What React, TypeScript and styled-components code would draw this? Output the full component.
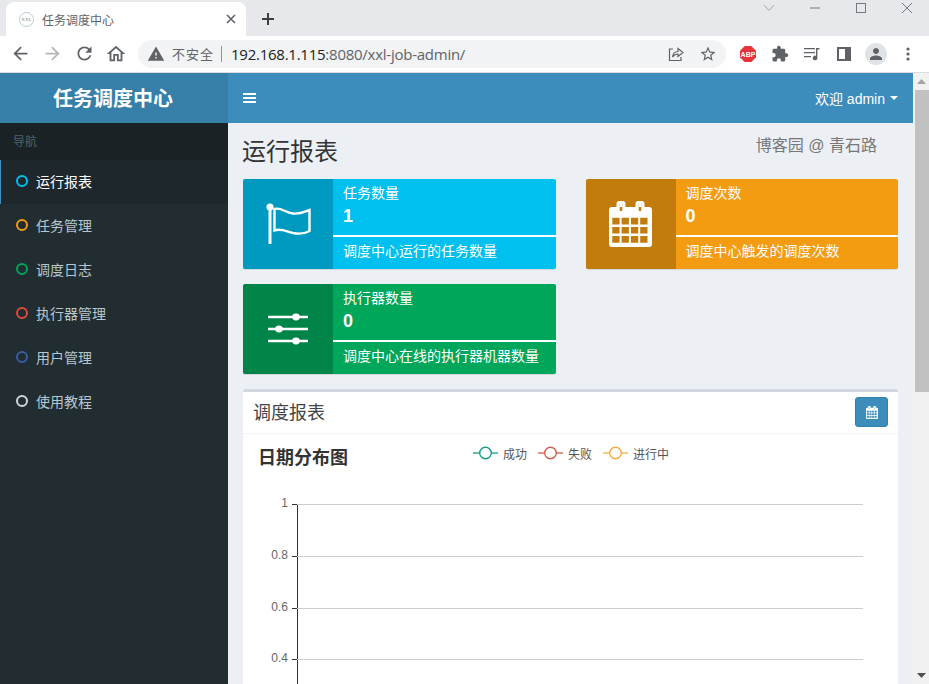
import React from "react";
import styled, { createGlobalStyle } from "styled-components";

const Global = createGlobalStyle`
  html, body { margin: 0; padding: 0; height: 100%; overflow: hidden; background: #fff; }
  * { box-sizing: border-box; }
  body { font-family: "Liberation Sans", "Noto Sans CJK SC", sans-serif; font-size: 14px; color: #333; }
`;

const Window = styled.div`
  width: 929px; height: 684px; display: flex; flex-direction: column; overflow: hidden;
`;
const TabStrip = styled.div`
  height: 36px; background: #e6e8ec; display: flex; align-items: flex-end; flex: none;
`;
const Tab = styled.div`
  width: 240px; height: 34px; margin-left: 6px; background: #fff; border-radius: 8px 8px 0 0;
  display: flex; align-items: center; padding: 0 9px 0 13px; color: #5f6368; font-size: 12px;
`;
const Favicon = styled.span`
  width: 15px; height: 15px; border-radius: 50%; border: 1.5px solid #b9cbd6; color: #8a8a8a;
  font: 5px "Liberation Serif", serif; display: flex; align-items: center; justify-content: center; margin-right: 8px; flex: none;
`;
const TabTitle = styled.span` flex: 1; padding-top: 1px; `;
const NewTab = styled.div`
  width: 28px; height: 28px; margin: 0 0 3px 8px; display: flex; align-items: center; justify-content: center; color: #3c4043;
`;
const WindowControls = styled.div`
  margin-left: auto; margin-right: -1px; align-self: flex-start; display: flex; height: 16px;
`;
const WindowButton = styled.div`
  width: 46px; height: 16px; display: flex; align-items: center; justify-content: center; color: #75787c;
`;
const Toolbar = styled.div`
  height: 37px; flex: none; background: #fff; display: flex; align-items: center; padding: 0 5px 1px 4px;
  border-bottom: 1px solid #dadce0;
`;
const ToolButton = styled.div<{ $dim?: boolean }>`
  width: 32px; height: 32px; flex: none; display: flex; align-items: center; justify-content: center;
  color: ${(p) => (p.$dim ? "#b4b6b9" : "#5f6368")};
`;
const Omnibox = styled.div`
  width: 588px; height: 28px; margin: 0 6px; background: #f1f3f4; border-radius: 14px; flex: none;
  display: flex; align-items: center; padding: 0 2px 0 9px; color: #5f6368;
`;
const Insecure = styled.span` font-size: 13px; margin-left: 7px; color: #5f6368; letter-spacing: 1px; `;
const Divider = styled.span` width: 1px; height: 16px; background: #8f9296; margin: 0 9px 0 7px; `;
const Url = styled.span` font-size: 15px; color: #5f6368; flex: 1; white-space: nowrap; font-family: "Open Sans", "Liberation Sans", sans-serif; letter-spacing: -0.25px; `;
const Host = styled.span` color: #202124; `;
const OmniIcon = styled.span` width: 32px; display: flex; justify-content: center; color: #5f6368; `;
const Avatar = styled.span`
  width: 22px; height: 22px; border-radius: 50%; background: #dfe3e6; display: flex; align-items: center; justify-content: center; color: #5f6368;
`;

const Viewport = styled.div` flex: 1; display: flex; min-height: 0; `;
const Page = styled.div`
  width: 913px; flex: none; display: grid; grid-template-columns: 228px 1fr; grid-template-rows: 50px 1fr; overflow: hidden; background: #ecf0f5;
`;
const Logo = styled.div`
  background: #367fa9; color: #fff; font-size: 20px; font-weight: 700; display: flex; align-items: center; justify-content: center;
  padding: 0 2px 2px 0;
`;
const Navbar = styled.div`
  background: #3c8dbc; color: #fff; display: flex; align-items: center; justify-content: space-between; padding: 0 15px;
`;
const Burger = styled.span` display: flex; color: #fff; `;
const UserMenu = styled.div` display: flex; align-items: center; font-size: 14px; gap: 5px; `;
const Caret = styled.span` width: 0; height: 0; border-left: 4px solid transparent; border-right: 4px solid transparent; border-top: 4px solid #fff; `;

const Sidebar = styled.nav` background: #222d32; display: flex; flex-direction: column; `;
const NavHeader = styled.div`
  height: 37px; background: #1a2226; color: #4b646f; font-size: 12px; padding: 0 0 2px 13px; display: flex; align-items: center;
`;
const NavItem = styled.div<{ $active?: boolean }>`
  height: 44px; display: flex; align-items: center; padding: 0 0 2px 15px; gap: 8px; font-size: 14px;
  color: ${(p) => (p.$active ? "#fff" : "#b8c7ce")};
  background: ${(p) => (p.$active ? "#1e282c" : "transparent")};
  border-left: 1px solid ${(p) => (p.$active ? "#3c8dbc" : "transparent")};
`;
const Dot = styled.span<{ $color: string }>`
  width: 12px; height: 12px; border-radius: 50%; border: 2px solid ${(p) => p.$color}; flex: none;
`;

const Content = styled.main` padding: 15px 15px 0; min-width: 0; overflow: hidden; `;
const TitleRow = styled.div` display: flex; justify-content: space-between; align-items: flex-start; height: 41px; padding-right: 21px; `;
const PageTitle = styled.h1` margin: 0 0 0 -1px; font-size: 24px; font-weight: 400; line-height: 28px; color: #333; `;
const Credit = styled.span` font-size: 16px; color: #777; line-height: 16px; `;
const Cards = styled.div` display: grid; grid-template-columns: 1fr 1fr; gap: 15px 30px; `;
const Card = styled.div<{ $color: string }>`
  height: 90px; display: flex; background: ${(p) => p.$color}; color: #fff; border-radius: 2px; box-shadow: 0 1px 1px rgba(0,0,0,.1); overflow: hidden;
`;
const CardIcon = styled.div`
  width: 90px; flex: none; background: rgba(0,0,0,.2); display: flex; align-items: center; justify-content: center;
`;
const CardBody = styled.div` flex: 1; padding: 4px 0 0; display: flex; flex-direction: column; `;
const CardLabel = styled.div` padding-left: 10px; font-size: 14px; line-height: 20px; `;
const CardNumber = styled.div` padding-left: 10px; font-size: 18px; font-weight: 700; line-height: 24px; margin-top: 1px; `;
const CardLine = styled.div` height: 2px; background: #fff; margin-top: 7px; `;
const CardNote = styled.div` padding-left: 10px; font-size: 14px; line-height: 29px; `;

const Box = styled.section`
  margin-top: 15px; background: #fff; border-top: 3px solid #d2d6de; border-radius: 3px 3px 0 0;
`;
const BoxHeader = styled.div`
  height: 42px; display: flex; align-items: center; justify-content: space-between; padding: 0 10px; border-bottom: 1px solid #f4f4f4;
`;
const BoxTitle = styled.h3` margin: -4px 0 0; font-size: 18px; font-weight: 400; color: #444; `;
const CalButton = styled.button`
  width: 33px; height: 30px; padding: 0; background: #3c8dbc; border: 1px solid #367fa9; border-radius: 3px; color: #fff;
  display: flex; align-items: center; justify-content: center; margin-top: -1px;
`;
const ChartHead = styled.div` display: flex; align-items: flex-start; padding: 11px 0 0 15px; height: 54px; `;
const ChartTitle = styled.h4` margin: 0; font-size: 18px; font-weight: 700; color: #333; line-height: 26px; `;
const Legend = styled.div` display: flex; margin: -2px 0 0 125px; gap: 11px; `;
const LegendItem = styled.div` display: flex; align-items: center; gap: 5px; font-size: 12px; color: #555; height: 20px; `;
const Plot = styled.svg` display: block; width: 655px; height: 260px; `;
const AxisText = styled.text` font-size: 12px; fill: #666; font-family: "Liberation Sans", sans-serif; `;

const Scrollbar = styled.div` flex: 1; background: #f1f1f1; display: flex; flex-direction: column; align-items: center; `;
const ArrowUp = styled.span` height: 17px; flex: none; display: flex; align-items: center; justify-content: center; `;
const Thumb = styled.div` width: 14px; margin-left: 1px; height: 302px; background: #c1c1c1; `;
const ArrowDown = styled.span` margin-top: auto; height: 17px; display: flex; align-items: center; justify-content: center; `;

const I = ({ d, size = 21 }: { d: string; size?: number }) => (
  <svg width={size} height={size} viewBox="0 0 24 24" fill="currentColor"><path d={d} /></svg>
);

const Flag = () => (
  <svg width="50" height="45" viewBox="0 0 50 45" style={{ marginLeft: 4 }}>
    <circle cx="5" cy="5" r="3.6" fill="#fff" />
    <path d="M5 6V42" stroke="#fff" strokeWidth="3" fill="none" />
    <path d="M9.5 7C16 5 20 10.5 28 11.5C35 12.5 40 9.5 44.5 8V29C40 31.5 35 32.5 28 31C20 29 16 26 9.5 28.5Z" stroke="#fff" strokeWidth="2.4" fill="none" />
  </svg>
);
const Sliders = () => (
  <svg width="42" height="34" viewBox="0 0 42 34">
    <g stroke="#fff" strokeWidth="2.4"><path d="M1 5H41M1 17H41M1 29H41" /></g>
    <g fill="#fff"><ellipse cx="29" cy="5" rx="3.8" ry="3.4" /><ellipse cx="12" cy="17" rx="3.8" ry="3.4" /><ellipse cx="29" cy="29" rx="3.8" ry="3.4" /></g>
  </svg>
);
const cells = (() => {
  let s = "";
  for (let r = 0; r < 3; r++) for (let c = 0; c < 4; c++) {
    const x = 3.3 + c * 9.3, y = 16.7 + r * 9.2;
    s += `M${x} ${y}h7.3v6.7h-7.3z`;
  }
  return s;
})();
const Calendar = ({ w, h }: { w: number; h: number }) => (
  <svg width={w} height={h} viewBox="0 0 43 46" fill="#fff">
    <path fillRule="evenodd" d={`M3 6H40A3 3 0 0 1 43 9V43A3 3 0 0 1 40 46H3A3 3 0 0 1 0 43V9A3 3 0 0 1 3 6Z M10.5 3h3v8h-3z M29.5 3h3v8h-3z ${cells}`} />
    <path fillRule="evenodd" d="M7.5 3A3 3 0 0 1 10.5 0H13.5A3 3 0 0 1 16.500 3V10A3 3 0 0 1 13.500 13H10.500A3 3 0 0 1 7.500 10Z M10.500 3h3v7h-3z" />
    <path fillRule="evenodd" d="M26.500 3A3 3 0 0 1 29.500 0H32.500A3 3 0 0 1 35.500 3V10A3 3 0 0 1 32.500 13H29.500A3 3 0 0 1 26.500 10Z M29.500 3h3v7h-3z" />
  </svg>
);
const Mark = ({ color }: { color: string }) => (
  <svg width="25" height="14" viewBox="0 0 25 14">
    <path d="M0 7H25" stroke={color} strokeWidth="1.3" />
    <circle cx="12.500" cy="7" r="5.800" fill="#fff" stroke={color} strokeWidth="1.4" />
  </svg>
);

const nav: [string, string][] = [
  ["运行报表", "#00c0ef"], ["任务管理", "#f39c12"], ["调度日志", "#00a65a"],
  ["执行器管理", "#dd4b39"], ["用户管理", "#3b5ba5"], ["使用教程", "#d2d6de"],
];
const ticks: [string, number][] = [["1", 70], ["0.8", 122], ["0.6", 174], ["0.4", 225]];

export default function App() {
  return (
    <Window>
      <Global />
      <TabStrip>
        <Tab>
          <Favicon>XXL</Favicon>
          <TabTitle>任务调度中心</TabTitle>
          <svg width="12" height="12" viewBox="0 0 12 12"><path d="M2 2L10 10M10 2L2 10" stroke="#5f6368" strokeWidth="1.6" /></svg>
        </Tab>
        <NewTab><svg width="14" height="14" viewBox="0 0 14 14"><path d="M7 1V13M1 7H13" stroke="currentColor" strokeWidth="2" /></svg></NewTab>
        <WindowControls>
          <WindowButton><svg width="12" height="8" viewBox="0 0 12 8" fill="none"><path d="M1 1L6 6.5L11 1" stroke="#a4a6aa" /></svg></WindowButton>
          <WindowButton><svg width="12" height="2" viewBox="0 0 12 2"><path d="M1 1H11" stroke="currentColor" /></svg></WindowButton>
          <WindowButton><svg width="10" height="10" viewBox="0 0 10 10"><rect x=".5" y=".5" width="9" height="9" fill="none" stroke="currentColor" /></svg></WindowButton>
          <WindowButton><svg width="12" height="12" viewBox="0 0 12 12"><path d="M1 1L11 11M11 1L1 11" stroke="currentColor" /></svg></WindowButton>
        </WindowControls>
      </TabStrip>
      <Toolbar>
        <ToolButton><I d="M20 11H7.83l5.59-5.59L12 4l-8 8 8 8 1.41-1.41L7.83 13H20v-2z" /></ToolButton>
        <ToolButton $dim><I d="M12 4l-1.41 1.41L16.17 11H4v2h12.17l-5.58 5.59L12 20l8-8z" /></ToolButton>
        <ToolButton><I d="M17.65 6.35C16.2 4.9 14.21 4 12 4c-4.42 0-7.99 3.58-7.99 8s3.57 8 7.99 8c3.73 0 6.84-2.55 7.73-6h-2.08c-.82 2.33-3.04 4-5.65 4-3.31 0-6-2.69-6-6s2.69-6 6-6c1.66 0 3.14.69 4.22 1.78L13 11h7V4l-2.35 2.35z" /></ToolButton>
        <ToolButton><I size={22} d="M12 5.69l5 4.5V18h-2v-6H9v6H7v-7.81l5-4.5M12 3L2 12h3v8h6v-6h2v6h6v-8h3L12 3z" /></ToolButton>
        <Omnibox>
          <I size={18} d="M1 21h22L12 2 1 21zm12-3h-2v-2h2v2zm0-4h-2v-4h2v4z" />
          <Insecure>不安全</Insecure>
          <Divider />
          <Url><Host>192.168.1.115</Host>:8080/xxl-job-admin/</Url>
          <OmniIcon>
            <svg width="16" height="16" viewBox="0 0 16 16" fill="none" stroke="currentColor" strokeWidth="1.2"><path d="M5 3H1.5V14.5H13V11" /><path d="M4.5 11C5 7.5 7.5 5.5 10 5.5V2.5L15 6.5L10 10.5V8C8 8 6 9 4.5 11Z" /></svg>
          </OmniIcon>
          <OmniIcon><I size={18} d="M22 9.24l-7.19-.62L12 2 9.19 8.63 2 9.24l5.46 4.73L5.82 21 12 17.27 18.18 21l-1.63-7.03L22 9.24zM12 15.4l-3.76 2.27 1-4.28-3.32-2.88 4.38-.38L12 6.1l1.71 4.04 4.38.38-3.32 2.88 1 4.28L12 15.4z" /></OmniIcon>
        </Omnibox>
        <ToolButton>
          <svg width="16" height="16" viewBox="0 0 16 16">
            <path d="M4.700 0H11.300L16 4.700V11.300L11.300 16H4.700L0 11.300V4.700Z" fill="#e5323b" />
            <text x="8" y="10.800" textAnchor="middle" fontSize="7" fontWeight="700" fill="#fff" fontFamily="Liberation Sans">ABP</text>
          </svg>
        </ToolButton>
        <ToolButton><I size={18} d="M20.5 11H19V7c0-1.1-.9-2-2-2h-4V3.5C13 2.12 11.88 1 10.5 1S8 2.12 8 3.5V5H4c-1.1 0-1.99.9-1.99 2v3.8H3.5c1.49 0 2.7 1.21 2.7 2.7s-1.21 2.7-2.7 2.7H2V20c0 1.1.9 2 2 2h3.8v-1.5c0-1.49 1.21-2.7 2.7-2.7 1.49 0 2.7 1.21 2.7 2.7V22H17c1.1 0 2-.9 2-2v-4h1.5c1.38 0 2.5-1.12 2.5-2.5S21.88 11 20.5 11z" /></ToolButton>
        <ToolButton>
          <svg width="16" height="14" viewBox="0 0 16 14" fill="currentColor"><path d="M0 1h11v1.3H0zM0 5h11v1.3H0zM0 9h7v1.3H0zM12 1h3.5v1.6H13.4V11a2.3 2.3 0 1 1-1.4-2.1Z" /></svg>
        </ToolButton>
        <ToolButton>
          <svg width="14" height="14" viewBox="0 0 14 14"><path fillRule="evenodd" fill="currentColor" d="M0 0H14V14H0Z M2 2V12H8V2Z" /></svg>
        </ToolButton>
        <ToolButton><Avatar><I size={18} d="M12 12c2.21 0 4-1.79 4-4s-1.79-4-4-4-4 1.79-4 4 1.79 4 4 4zm0 2c-2.67 0-8 1.34-8 4v2h16v-2c0-2.66-5.33-4-8-4z" /></Avatar></ToolButton>
        <ToolButton>
          <svg width="4" height="14" viewBox="0 0 4 14" fill="currentColor"><circle cx="2" cy="2" r="1.6" /><circle cx="2" cy="7" r="1.6" /><circle cx="2" cy="12" r="1.6" /></svg>
        </ToolButton>
      </Toolbar>
      <Viewport>
        <Page>
          <Logo>任务调度中心</Logo>
          <Navbar>
            <Burger><svg width="13" height="12" viewBox="0 0 13 12" fill="currentColor"><path d="M0 1h13v2H0zM0 5h13v2H0zM0 9h13v2H0z" /></svg></Burger>
            <UserMenu>欢迎 admin <Caret /></UserMenu>
          </Navbar>
          <Sidebar>
            <NavHeader>导航</NavHeader>
            {nav.map(([t, c], i) => (
              <NavItem key={t} $active={i === 0}><Dot $color={c} />{t}</NavItem>
            ))}
          </Sidebar>
          <Content>
            <TitleRow>
              <PageTitle>运行报表</PageTitle>
              <Credit>博客园 @ 青石路</Credit>
            </TitleRow>
            <Cards>
              <Card $color="#00c0ef">
                <CardIcon><Flag /></CardIcon>
                <CardBody><CardLabel>任务数量</CardLabel><CardNumber>1</CardNumber><CardLine /><CardNote>调度中心运行的任务数量</CardNote></CardBody>
              </Card>
              <Card $color="#f39c12">
                <CardIcon><Calendar w={43} h={46} /></CardIcon>
                <CardBody><CardLabel>调度次数</CardLabel><CardNumber>0</CardNumber><CardLine /><CardNote>调度中心触发的调度次数</CardNote></CardBody>
              </Card>
              <Card $color="#00a65a">
                <CardIcon><Sliders /></CardIcon>
                <CardBody><CardLabel>执行器数量</CardLabel><CardNumber>0</CardNumber><CardLine /><CardNote>调度中心在线的执行器机器数量</CardNote></CardBody>
              </Card>
            </Cards>
            <Box>
              <BoxHeader>
                <BoxTitle>调度报表</BoxTitle>
                <CalButton><Calendar w={12} h={13} /></CalButton>
              </BoxHeader>
              <ChartHead>
                <ChartTitle>日期分布图</ChartTitle>
                <Legend>
                  <LegendItem><Mark color="#1a9c84" />成功</LegendItem>
                  <LegendItem><Mark color="#cf5c4c" />失败</LegendItem>
                  <LegendItem><Mark color="#f0ad3f" />进行中</LegendItem>
                </Legend>
              </ChartHead>
              <Plot viewBox="0 0 655 260">
                <path d="M54.5 16V260" stroke="#333" fill="none" />
                {ticks.map(([t, y]) => {
                  const yy = y - 54 + 0.5;
                  return (
                    <g key={t}>
                      <path d={`M54 ${yy}H620`} stroke="#ccc" fill="none" />
                      <path d={`M49 ${yy}H54`} stroke="#333" fill="none" />
                      <AxisText x="45" y={yy + 2.5} textAnchor="end">{t}</AxisText>
                    </g>
                  );
                })}
              </Plot>
            </Box>
          </Content>
        </Page>
        <Scrollbar>
          <ArrowUp><svg width="9" height="5" viewBox="0 0 9 5"><path d="M0 5L4.5 0L9 5Z" fill="#a3a3a3" /></svg></ArrowUp>
          <Thumb />
          <ArrowDown><svg width="9" height="5" viewBox="0 0 9 5"><path d="M0 0L4.5 5L9 0Z" fill="#505050" /></svg></ArrowDown>
        </Scrollbar>
      </Viewport>
    </Window>
  );
}
